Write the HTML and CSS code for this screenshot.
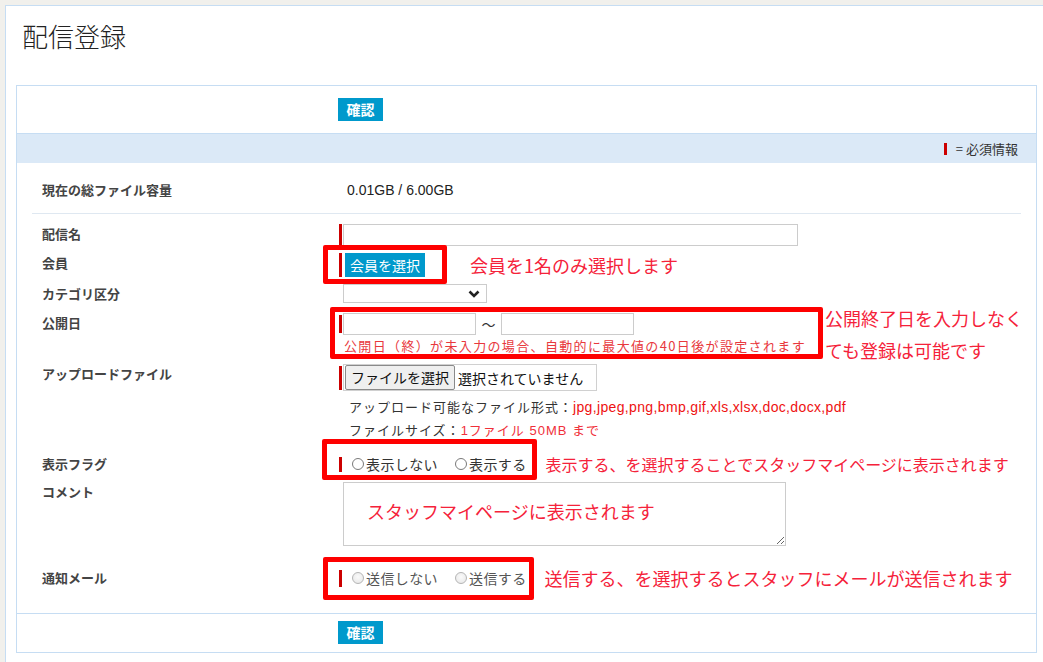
FILE: index.html
```html
<!DOCTYPE html>
<html lang="ja">
<head>
<meta charset="utf-8">
<title>配信登録</title>
<link rel="stylesheet" href="styles.css">
</head>
<body>
<div class="page">
  <h1 class="title">配信登録</h1>
  <div class="box">
    <div class="bar-top"><button class="btn">確認</button></div>
    <div class="band"><span class="req-mark"></span>= 必須情報</div>
    <div class="form">
      <div class="row summary">
        <div class="label">現在の総ファイル容量</div>
        <div class="value summary-value">0.01GB / 6.00GB</div>
      </div>
      <div class="row r-name">
        <div class="label">配信名</div>
        <div class="value"><span class="req req-22"></span><input class="text name-input" type="text"></div>
      </div>
      <div class="row r-member">
        <div class="label">会員</div>
        <div class="value"><span class="req req-24 gap3"></span><button class="btn-member">会員を選択</button><span class="note note-member">会員を1名のみ選択します</span></div>
      </div>
      <div class="row r-cat">
        <div class="label">カテゴリ区分</div>
        <div class="value"><select class="select"><option></option></select></div>
      </div>
      <div class="row r-date">
        <div class="label">公開日</div>
        <div class="value col">
          <div class="date-line"><span class="req req-18"></span><input class="text date-input" type="text"><span class="tilde">〜</span><input class="text date-input" type="text"></div>
          <div class="date-note">公開日（終）が未入力の場合、自動的に最大値の40日後が設定されます</div>
        </div>
      </div>
      <div class="row r-file">
        <div class="label">アップロードファイル</div>
        <div class="value col">
          <div class="file-line"><span class="req req-24"></span><span class="file-box"><span class="file-btn">ファイルを選択</span><span class="file-text">選択されていません</span></span></div>
          <div class="file-note">アップロード可能なファイル形式：<span class="red">jpg,jpeg,png,bmp,gif,xls,xlsx,doc,docx,pdf</span></div>
          <div class="file-note">ファイルサイズ：<span class="red2">1ファイル 50MB まで</span></div>
        </div>
      </div>
      <div class="row r-flag">
        <div class="label">表示フラグ</div>
        <div class="value"><span class="req req-15 gap11"></span><label class="radio"><input type="radio" name="flag"><span>表示しない</span></label><label class="radio"><input type="radio" name="flag"><span>表示する</span></label><span class="note note-flag">表示する、を選択することでスタッフマイページに表示されます</span></div>
      </div>
      <div class="row r-comment">
        <div class="label">コメント</div>
        <div class="value"><textarea class="textarea">スタッフマイページに表示されます</textarea></div>
      </div>
      <div class="row r-mail">
        <div class="label">通知メール</div>
        <div class="value"><span class="req req-17 gap11"></span><label class="radio dis"><input type="radio" name="mail" disabled><span>送信しない</span></label><label class="radio dis"><input type="radio" name="mail" disabled><span>送信する</span></label><span class="note note-mail">送信する、を選択するとスタッフにメールが送信されます</span></div>
      </div>
    </div>
    <div class="bar-bottom"><button class="btn">確認</button></div>

    <div class="mark mark-member"></div>
    <div class="mark mark-date"></div>
    <div class="mark mark-flag"></div>
    <div class="mark mark-mail"></div>
    <div class="note note-date">公開終了日を入力しなく<br>ても登録は可能です</div>
  </div>
</div>
</body>
</html>
```

FILE: styles.css
```css
* { box-sizing: border-box; }
html, body { height: 100%; }
body {
  margin: 0;
  background: #f1f0ec;
  font-family: "Liberation Sans", "Noto Sans CJK JP", sans-serif;
  color: #333;
  overflow: hidden;
}
.page {
  margin: 5px 0 0 5px;
  background: #fff;
  border-top: 1px solid #c6ddf3;
  border-left: 1px solid #c6ddf3;
  min-height: 700px;
  padding-top: 12px;
}
.title {
  margin: 0 0 31px 16px;
  font-family: "Noto Sans CJK JP", sans-serif;
  font-size: 26px;
  line-height: 36px;
  font-weight: 300;
  color: #222;
}
.box {
  position: relative;
  margin-left: 10px;
  width: 1021px;
  border: 1px solid #c6ddf3;
}
.btn {
  display: block;
  width: 45px;
  height: 23px;
  padding: 0;
  border: none;
  background: #0099cc;
  color: #fff;
  font-family: "Noto Sans CJK JP", sans-serif;
  font-size: 14px;
  font-weight: 700;
  line-height: 23px;
}
.bar-top {
  padding: 12px 0 12px 321px;
  border-bottom: 1px solid #c6ddf3;
}
.bar-bottom {
  padding: 7px 0 8px 321px;
  border-top: 1px solid #c6ddf3;
}
.band {
  height: 29px;
  background: #dbe9f7;
  display: flex;
  align-items: center;
  justify-content: flex-end;
  padding-right: 18px;
  font-family: "Noto Sans CJK JP", sans-serif;
  font-size: 13px;
  color: #333;
}
.req-mark {
  width: 3px;
  height: 12px;
  background: #cc0000;
  margin-right: 9px;
}
.form { padding: 0 15px 25px; }
.row { display: flex; align-items: flex-start; }
.label {
  width: 307px;
  flex: none;
  padding-left: 10px;
  font-family: "Noto Sans CJK JP", sans-serif;
  font-size: 13px;
  line-height: 20px;
  font-weight: 700;
  color: #444;
}
.value { display: flex; align-items: center; }
.value.col { flex-direction: column; align-items: flex-start; }
.summary { padding: 17px 0 13px; border-bottom: 1px solid #dfe8f1; }
.summary-value {
  padding-left: 8px;
  font-size: 14px;
  line-height: 20px;
  color: #222;
}
.req { width: 3px; background: #cc0000; margin-right: 1px; flex: none; }
.req-22 { height: 22px; }
.req-24 { height: 24px; }
.req-18 { height: 18px; }
.req-15 { height: 15px; }
.req-17 { height: 17px; }
.gap3 { margin-right: 3px; }
.gap11 { margin-right: 10px; }
.text {
  height: 22px;
  border: 1px solid #cccccc;
  background: #fff;
  padding: 0 4px;
  margin: 0;
  font-size: 13px;
}
.name-input { width: 455px; }
.r-name { padding-top: 10px; }
.r-member { padding-top: 7px; }
.btn-member {
  width: 80px;
  height: 24px;
  padding: 0;
  border: none;
  background: #0099cc;
  color: #fff;
  font-family: "Noto Sans CJK JP", sans-serif;
  font-size: 14px;
  line-height: 24px;
}
.note {
  font-family: "Noto Sans CJK JP", sans-serif;
  color: #f5223a;
  white-space: nowrap;
}
.note-member { margin-left: 45px; font-size: 18px; line-height: 24px; }
.r-cat { padding-top: 7px; }
.select {
  margin: 0 0 0 4px;
  width: 144px;
  height: 19px;
  border: 1px solid #cccccc;
  border-radius: 0;
  background: #fff url("data:image/svg+xml,%3Csvg xmlns='http://www.w3.org/2000/svg' width='12' height='8' viewBox='0 0 12 8'%3E%3Cpath d='M1.5 1.5 6 6 10.5 1.5' fill='none' stroke='%23222' stroke-width='2.6'/%3E%3C/svg%3E") no-repeat right 6px center;
  -webkit-appearance: none;
  appearance: none;
}
.r-date { padding-top: 9px; }
.date-line { display: flex; align-items: center; }
.date-input { width: 133px; }
.tilde {
  width: 25px;
  text-align: center;
  font-family: "Noto Sans CJK JP", sans-serif;
  font-size: 14px;
  color: #333;
}
.date-note {
  margin-top: 1px;
  padding-left: 5px;
  font-family: "Noto Sans CJK JP", sans-serif;
  font-size: 13px;
  line-height: 20px;
  letter-spacing: 1.35px;
  color: #e8383d;
  white-space: nowrap;
}
.r-file { padding-top: 8px; }
.file-line { display: flex; align-items: center; }
.file-box {
  display: flex;
  align-items: center;
  width: 254px;
  height: 27px;
  border: 1px solid #d0d0d0;
  padding-left: 1px;
}
.file-btn {
  width: 110px;
  height: 25px;
  border: 1px solid #8a8a8a;
  border-radius: 2px;
  background: #efefef;
  font-family: "Noto Sans CJK JP", sans-serif;
  font-size: 14px;
  line-height: 23px;
  text-align: center;
  color: #111;
}
.file-text {
  padding-left: 3px;
  font-family: "Noto Sans CJK JP", sans-serif;
  font-size: 14px;
  color: #111;
}
.file-line + .file-note { margin-top: 5px; }
.file-note {
  padding-left: 10px;
  font-family: "Liberation Sans", "Noto Sans CJK JP", sans-serif;
  font-size: 13px;
  line-height: 23px;
  letter-spacing: 1px;
  color: #333;
  white-space: nowrap;
}
.file-note .red { color: #ee1111; letter-spacing: 0.35px; font-size: 14px; }
.file-note .red2 { color: #f0303a; }
.r-flag { padding-top: 12px; }
.radio {
  display: flex;
  align-items: center;
  margin-right: 17px;
  font-family: "Noto Sans CJK JP", sans-serif;
  font-size: 14px;
  line-height: 20px;
  letter-spacing: 0.4px;
  color: #333;
}
.radio:last-of-type { margin-right: 0; }
.radio input {
  -webkit-appearance: none;
  appearance: none;
  width: 12px;
  height: 12px;
  margin: 0 2px 0 0;
  border: 1px solid #7a7a7a;
  border-radius: 50%;
  background: #fff;
}
.radio.dis { color: #555; }
.radio.dis input {
  border-color: #b5b5b5;
  background: radial-gradient(circle at 50% 40%, #fafafa 0, #e6e6e6 100%);
}
.note-flag { margin-left: 19px; font-size: 16px; line-height: 20px; }
.note-mail { margin-left: 18px; font-size: 18px; line-height: 20px; }
.r-comment { padding-top: 8px; }
.textarea {
  margin: 0 0 0 4px;
  width: 443px;
  height: 64px;
  border: 1px solid #cccccc;
  padding: 16px 23px;
  resize: both;
  font-family: "Noto Sans CJK JP", sans-serif;
  font-size: 18px;
  line-height: 24px;
  color: #f5223a;
  overflow: hidden;
}
.r-mail { padding-top: 22px; }
.mark {
  position: absolute;
  border: 5px solid #fe0000;
  border-radius: 2px;
}
.mark-member { left: 306px; top: 159px; width: 124px; height: 39px; }
.mark-date { left: 313px; top: 221px; width: 493px; height: 52px; }
.mark-flag { left: 305px; top: 353px; width: 215px; height: 41px; }
.mark-mail { left: 306px; top: 471px; width: 211px; height: 43px; }
.note-date {
  position: absolute;
  left: 808px;
  top: 216px;
  font-size: 18px;
  line-height: 32px;
}
```
